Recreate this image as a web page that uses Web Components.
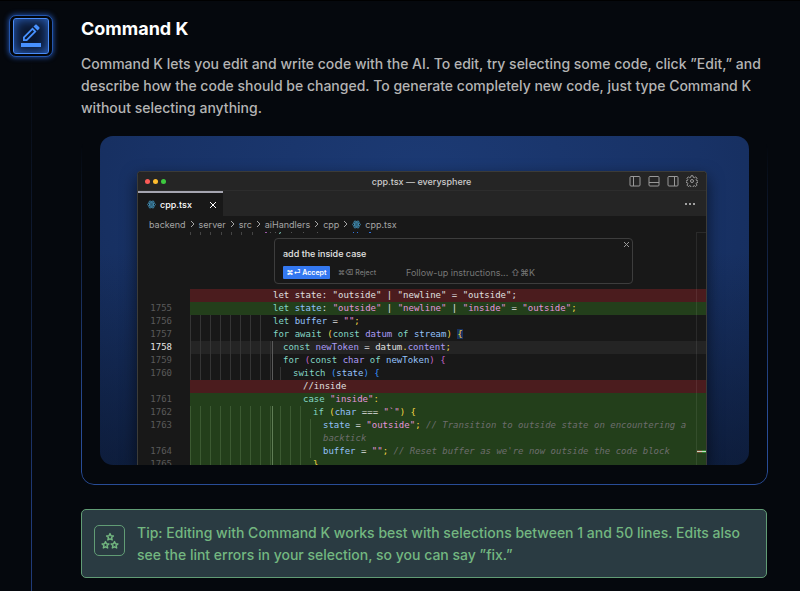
<!DOCTYPE html>
<html lang="en">
<head>
<meta charset="utf-8">
<meta name="viewport" content="width=device-width, initial-scale=1">
<title>Command K</title>
<style>
  html {
    background: #05080d;
  }
  body {
    margin: 0;
    border-top: 1px solid #000;
    color: #b4b4b4;
    font: 500 14px/22px Inter, sans-serif;
  }
</style>
</head>
<body>

<feature-section>
  <icon-badge slot="icon"></icon-badge>
  <span slot="title">Command K</span>
  <span slot="text">Command K lets you edit and write code with the AI. To edit, try selecting some code, click ”Edit,” and<br>
    describe how the code should be changed. To generate completely new code, just type Command K<br>
    without selecting anything.</span>
  <demo-frame><editor-window></editor-window></demo-frame>
  <tip-box>Tip: Editing with Command K works best with selections between 1 and 50 lines. Edits also<br>
    see the lint errors in your selection, so you can say ”fix.”</tip-box>
</feature-section>

<template id="feature-section">
  <style>
    :host {
      display: grid;
      grid-template-columns: 44px minmax(0, 1fr);
      column-gap: 28px;
      box-sizing: border-box;
      min-height: calc(100vh - 1px);
      padding: 14px 32px 0 9px;
    }
    .rail {
      display: flex;
      flex-direction: column;
      align-items: center;
    }
    .line {
      flex: 1;
      width: 1px;
      background: linear-gradient(rgba(40, 75, 150, 0), rgba(40, 75, 150, .35) 45%, #1f3a78 85%);
    }
    h2 {
      margin: 0 0 12px;
      padding-top: 2px;
      color: #fff;
      font-size: 18px;
      font-weight: 700;
      line-height: 24px;
    }
    p {
      margin: 0 0 17px;
      white-space: nowrap;
    }
  </style>
  <div class="rail">
    <slot name="icon"></slot>
    <div class="line"></div>
  </div>
  <div class="main">
    <h2><slot name="title"></slot></h2>
    <p><slot name="text"></slot></p>
    <slot></slot>
  </div>
</template>

<template id="icon-badge">
  <style>
    :host {
      display: block;
      box-sizing: border-box;
      width: 44px;
      height: 42px;
      padding: 2px 3px;
      border: 1px solid #2456ad;
      border-radius: 7px;
      background: #030509;
      box-shadow: 0 0 5px 1px #1d4795;
    }
    .tile {
      display: grid;
      place-items: center;
      box-sizing: border-box;
      height: 36px;
      border: 1px solid #4a8cf7;
      border-radius: 3px;
      background: #0a1730;
      box-shadow: inset 0 0 12px #2f69cc;
    }
  </style>
  <div class="tile">
    <svg width="22" height="24" viewBox="0 0 22 24" fill="#4791ff" aria-hidden="true">
      <path d="M1 19h20v4H1z"/>
      <path fill-rule="evenodd" d="M3 17v-4L12.500 3.500l4 4L7 17zM4.800 15.200h1.500l7.700-7.700-1.500-1.500-7.700 7.700zM13.500 2.500l1.800-1.800c.4-.4 1-.4 1.400 0l2.600 2.600c.4.4.4 1 0 1.400l-1.800 1.800z"/>
    </svg>
  </div>
</template>

<template id="demo-frame">
  <style>
    :host {
      display: block;
      position: relative;
      padding: 0 19px 20px;
    }
    /* outline that fades out towards the top */
    :host::before {
      content: "";
      position: absolute;
      inset: 0;
      border: 1px solid #284c96;
      border-radius: 13px;
      mask-image: linear-gradient(transparent 2%, rgba(0, 0, 0, .35) 30%, #000 80%);
      pointer-events: none;
    }
    .picture {
      overflow: hidden;
      padding: 35px 42px 0 37px;
      border-radius: 13px;
      background:
        linear-gradient(rgba(8, 18, 38, 0) 35%, rgba(8, 18, 38, .55)),
        radial-gradient(ellipse at 50% 15%, #1c3a74, #183266 60%, #142a56);
    }
  </style>
  <div class="picture"><slot></slot></div>
</template>

<template id="code-line">
  <style>
    :host {
      display: flex;
      min-height: 13px;
    }
    .number {
      flex: none;
      box-sizing: border-box;
      width: 52px;
      padding-right: 18px;
      color: #5a5a5a;
      text-align: right;
    }
    .code {
      flex: 1;
      padding-left: calc(83px + var(--level, 0) * 10px);
      white-space: pre;
      background-image: repeating-linear-gradient(90deg, var(--guide, #353535) 0 1px, transparent 1px 10px);
      background-size: calc(80px + var(--level, 0) * 10px) 100%;
      background-repeat: no-repeat;
    }
    /* indented lines sit inside the active block, whose guide is brighter */
    :host([level]) .code {
      background-image:
        linear-gradient(90deg, transparent 82px, var(--active, #5a5a5a) 82px 83px, transparent 83px),
        repeating-linear-gradient(90deg, var(--guide, #353535) 0 1px, transparent 1px 10px);
      background-size: 100% 100%, calc(72px + var(--level, 0) * 10px) 100%;
    }
    :host([kind="removed"]) .code,
    :host([plain]) .code {
      background-image: none;
    }
    :host([kind="removed"]) .code {
      background-color: #4b1c1e;
    }
    :host([kind="added"]) .code {
      --guide: #3c5a32;
      --active: #5f7d55;
      background-color: #233f1b;
    }
    :host([current]) .code {
      background-color: #242424;
    }
    :host([current]) .number {
      color: #e4e4e4;
    }
  </style>
  <div class="number"></div>
  <div class="code"><slot></slot></div>
</template>

<template id="editor-window">
  <style>
    :host {
      display: block;
      position: relative;
      box-sizing: border-box;
      height: 294px;
      overflow: hidden;
      border: 1px solid #3b3b38;
      border-bottom: 0;
      border-radius: 4px 4px 0 0;
      background: #181818;
      box-shadow: 0 6px 16px rgba(0, 0, 0, .6);
      color: #ccc;
      font: 500 9px/13px Inter, sans-serif;
    }
    button, input {
      margin: 0;
      padding: 0;
      border: 0;
      background: none;
      color: inherit;
      font: inherit;
    }
    svg {
      display: block;
      fill: none;
      stroke: currentColor;
    }
    .atom {
      color: #4395bd;
    }
    .titlebar {
      display: grid;
      grid-template-columns: 1fr auto 1fr;
      align-items: center;
      height: 18px;
      padding: 0 8px 0 7px;
      border-bottom: 1px solid #2d2d2d;
      background: #252525;
    }
    .lights {
      display: flex;
      gap: 3px;
    }
    .lights i {
      width: 5px;
      height: 5px;
      border-radius: 50%;
    }
    .tools {
      display: flex;
      justify-content: flex-end;
      align-items: center;
      gap: 7px;
      color: #999;
    }
    .tabs {
      display: flex;
      justify-content: space-between;
      height: 25px;
      background: #252525;
    }
    .tab {
      display: flex;
      align-items: center;
      box-sizing: border-box;
      width: 85px;
      padding: 0 6px 0 9px;
      border-top: 2px solid #a5a5b0;
      background: #181818;
      color: #fff;
    }
    .tab span {
      flex: 1;
      padding-left: 4px;
      text-align: left;
    }
    .more {
      padding-right: 11px;
    }
    nav {
      display: flex;
      align-items: center;
      gap: 4px;
      height: 16px;
      padding-left: 11px;
      font-weight: 400;
      color: #a5a5a5;
    }
    nav a {
      color: inherit;
      text-decoration: none;
    }
    .cut {
      height: 6px;
    }
    .prompt {
      position: relative;
      box-sizing: border-box;
      width: 359px;
      height: 46px;
      margin: 0 0 5px 136px;
      padding: 8px 8px 0;
      border: 1px solid #3d3d3d;
      border-radius: 4px;
      color: #e6e6e6;
    }
    .prompt .close {
      position: absolute;
      top: 2px;
      right: 2px;
      color: #999;
    }
    .actions {
      display: flex;
      align-items: center;
      margin-top: 6px;
      font-size: 7px;
    }
    .accept {
      width: 47px;
      height: 13px;
      border-radius: 1px;
      background: #3478f0;
      color: #fff;
      font-weight: 600;
    }
    .reject {
      width: 54px;
      color: #777;
    }
    .prompt input {
      flex: 1;
      min-width: 0;
      margin-left: 22px;
      font-size: 9px;
      font-weight: 400;
    }
    .prompt input::placeholder {
      color: #777;
      opacity: 1;
    }
    .source {
      font: 9px/13px "DejaVu Sans Mono", monospace;
      color: #e0e0e0;
    }
    .k { color: #83d6c5; }
    .v { color: #94c1fa; }
    .p { color: #aa9bf5; }
    .s { color: #e394dc; }
    .y { color: #f5d745; }
    .m { color: #c565c9; }
    .b { color: #3794ff; }
    .c { color: #6d6d6d; font-style: italic; }
    .source .match { background: #18315e; }
    .ruler {
      position: absolute;
      top: 60px;
      right: 0;
      bottom: 0;
      width: 9px;
      border-top: 1px solid rgba(255, 255, 255, .08);
      border-left: 1px solid rgba(255, 255, 255, .08);
    }
    .ruler i {
      position: absolute;
      bottom: 12px;
      left: 0;
      width: 100%;
      height: 3px;
      background: linear-gradient(transparent 33%, #c9d9c4 33% 66%, transparent 66%), linear-gradient(90deg, #6d4a2c 60%, #2d8530 60%);
    }
  </style>

  <div class="titlebar">
    <div class="lights">
      <i style="background: #fc5b57"></i>
      <i style="background: #fdbc2e"></i>
      <i style="background: #3dc93f"></i>
    </div>
    <div>cpp.tsx — everysphere</div>
    <div class="tools">
      <button aria-label="Toggle side bar"><svg width="12" height="12" viewBox="0 0 12 12"><rect x="1" y="1.500" width="10" height="9.500" rx="1"/><path d="M4.500 1.500V11"/></svg></button>
      <button aria-label="Toggle panel"><svg width="12" height="12" viewBox="0 0 12 12"><rect x="1" y="1.500" width="10" height="9.500" rx="1"/><path d="M1 7.500h10"/></svg></button>
      <button aria-label="Toggle secondary side bar"><svg width="12" height="12" viewBox="0 0 12 12"><rect x="1" y="1.500" width="10" height="9.500" rx="1"/><path d="M7.500 1.500V11"/></svg></button>
      <button aria-label="Settings"><svg width="12" height="12" viewBox="0 0 24 24" stroke-width="2"><circle cx="12" cy="12" r="3"/><path d="M10 1.500h4l.6 3.200 2 .8 2.700-1.800 2.800 2.800-1.800 2.700.8 2 3.200.6v3l-3.200.7-.8 2 1.800 2.700-2.800 2.800-2.700-1.800-2 .8-.6 3.200h-4l-.6-3.200-2-.8-2.700 1.800-2.800-2.800 1.800-2.700-.8-2-3.200-.7v-3l3.200-.6.800-2-1.800-2.700 2.800-2.800 2.700 1.800 2-.8z"/></svg></button>
    </div>
  </div>

  <div class="tabs">
    <button class="tab">
      <svg class="atom" width="9" height="9" viewBox="0 0 18 18" stroke-width="1.500"><circle cx="9" cy="9" r="1.500"/><ellipse cx="9" cy="9" rx="8" ry="3.400"/><ellipse cx="9" cy="9" rx="8" ry="3.400" transform="rotate(60 9 9)"/><ellipse cx="9" cy="9" rx="8" ry="3.400" transform="rotate(120 9 9)"/></svg>
      <span>cpp.tsx</span>
      <svg width="8" height="8" viewBox="0 0 8 8"><path d="M1 1l6 6M7 1L1 7"/></svg>
    </button>
    <button class="more" aria-label="More actions">
      <svg width="10" height="4" viewBox="0 0 10 4"><path stroke-width="1.500" d="M0 2h2M4 2h2M8 2h2"/></svg>
    </button>
  </div>

  <nav></nav>
  <svg class="cut" width="300" height="6" viewBox="0 0 300 6"><path stroke="#444" d="M52.500 0v3M62.500 0v3M72.500 0v3M83.500 0v3M93.500 0v3M103.500 0v3M114.500 0v3"/><path stroke="#9b58a8" d="M127 .5h2"/><path stroke="#555" d="M132 .5h1M137 .5h1M153 .5h1M165 .5h1M179 .5h1"/><path stroke="#83d6c5" d="M141 1.500l2-1"/><path stroke="#3074e0" d="M215 .5h1M219 .5h1M231 .5h2"/></svg>

  <div class="prompt">
    <div>add the inside case</div>
    <button class="close" aria-label="Close"><svg width="7" height="7" viewBox="0 0 7 7"><path d="M1 1l5 5M6 1L1 6"/></svg></button>
    <div class="actions">
      <button class="accept">⌘⏎ Accept</button>
      <button class="reject">⌘⌫ Reject</button>
      <input type="text" aria-label="Follow-up instructions" placeholder="Follow-up instructions... ⇧⌘K">
    </div>
  </div>

  <div class="source">
    <code-line kind="removed">let state: "outside" | "newline" = "outside";</code-line>
    <code-line number="1755" kind="added" plain><span class="k">let</span> <span class="v">state</span>: <span class="s">"outside"</span> | <span class="s">"newline"</span> | <span class="s">"inside"</span> = <span class="s">"outside"</span><span class="y">;</span></code-line>
    <code-line number="1756"><span class="k">let</span> <span class="v">buffer</span> = <span class="s">""</span><span class="y">;</span></code-line>
    <code-line number="1757"><span class="k">for await</span> <span class="y">(</span><span class="k">const</span> <span class="p">datum</span> <span class="k">of</span> <span class="v">stream</span><span class="y">)</span> <span class="y match">{</span></code-line>
    <code-line number="1758" level="1" current><span class="k">const</span> <span class="p">newToken</span> = datum<span class="y">.</span><span class="p">content</span><span class="y">;</span></code-line>
    <code-line number="1759" level="1"><span class="k">for</span> <span class="m">(</span><span class="k">const</span> <span class="p">char</span> <span class="k">of</span> <span class="v">newToken</span><span class="m">)</span> <span class="m">{</span></code-line>
    <code-line number="1760" level="2"><span class="k">switch</span> <span class="b">(</span><span class="v">state</span><span class="b">)</span> <span class="b">{</span></code-line>
    <code-line kind="removed" level="3">//inside</code-line>
    <code-line number="1761" kind="added" level="3" plain><span class="k">case</span> <span class="s">"inside"</span><span class="y">:</span></code-line>
    <code-line number="1762" kind="added" level="4"><span class="k">if</span> <span class="y">(</span><span class="v">char</span> === <span class="s">"`"</span><span class="y">)</span> <span class="y">{</span></code-line>
    <code-line number="1763" kind="added" level="5"><span class="v">state</span> = <span class="s">"outside"</span><span class="y">;</span> <span class="c">// Transition to outside state on encountering a<br>backtick</span></code-line>
    <code-line number="1764" kind="added" level="5"><span class="v">buffer</span> = <span class="s">""</span><span class="y">;</span> <span class="c">// Reset buffer as we're now outside the code block</span></code-line>
    <code-line number="1765" kind="added" level="4"><span class="y">}</span></code-line>
  </div>
  <div class="ruler"><i></i></div>
</template>

<template id="tip-box">
  <style>
    :host {
      display: flex;
      align-items: center;
      gap: 12px;
      box-sizing: border-box;
      min-height: 69px;
      margin: 24px 1px 0 0;
      padding: 11px 12px;
      border: 1px solid #619c75;
      border-radius: 5px;
      background: #2a3b42;
      color: #73b780;
      white-space: nowrap;
    }
    .icon {
      flex: none;
      align-self: flex-start;
      display: grid;
      place-items: center;
      box-sizing: border-box;
      width: 31px;
      height: 31px;
      margin-top: 4px;
      border: 1px solid #619c75;
      border-radius: 5px;
    }
  </style>
  <div class="icon">
    <svg width="18" height="18" viewBox="0 0 18 18" fill="none" stroke="currentColor" stroke-width="1.400" stroke-linejoin="round" aria-hidden="true">
      <defs><path id="star" d="M0-3.400L1-1.200l2.400.2-1.800 1.600.6 2.400L0 1.800l-2.200 1.200.6-2.400L-3.400-1l2.400-.2z"/></defs>
      <use href="#star" x="9" y="5"/>
      <use href="#star" x="4.500" y="13"/>
      <use href="#star" x="13.500" y="13"/>
    </svg>
  </div>
  <div><slot></slot></div>
</template>

<script>
  class BaseElement extends HTMLElement {
    constructor() {
      super();
      const template = document.getElementById(this.localName);
      this.attachShadow({ mode: "open" }).appendChild(
        template.content.cloneNode(true)
      );
    }
  }

  customElements.define("feature-section", class extends BaseElement {});
  customElements.define("icon-badge", class extends BaseElement {});
  customElements.define("demo-frame", class extends BaseElement {});
  customElements.define("tip-box", class extends BaseElement {});

  class CodeLine extends BaseElement {
    connectedCallback() {
      this.shadowRoot.querySelector(".number").textContent =
        this.getAttribute("number") || "";
      this.style.setProperty("--level", this.getAttribute("level") || 0);
    }
  }

  customElements.define("code-line", CodeLine);

  const chevron =
    '<svg width="5" height="8" viewBox="0 0 5 8"><path d="M1 1l3 3-3 3"/></svg>';

  class EditorWindow extends BaseElement {
    path = ["backend", "server", "src", "aiHandlers", "cpp"];

    connectedCallback() {
      const atom = this.shadowRoot.querySelector(".atom").outerHTML;
      this.shadowRoot.querySelector("nav").innerHTML =
        this.path.map((name) => `<a href="#">${name}</a>${chevron}`).join("") +
        `${atom}<a href="#">cpp.tsx</a>`;
    }
  }

  customElements.define("editor-window", EditorWindow);
</script>
</body>
</html>
